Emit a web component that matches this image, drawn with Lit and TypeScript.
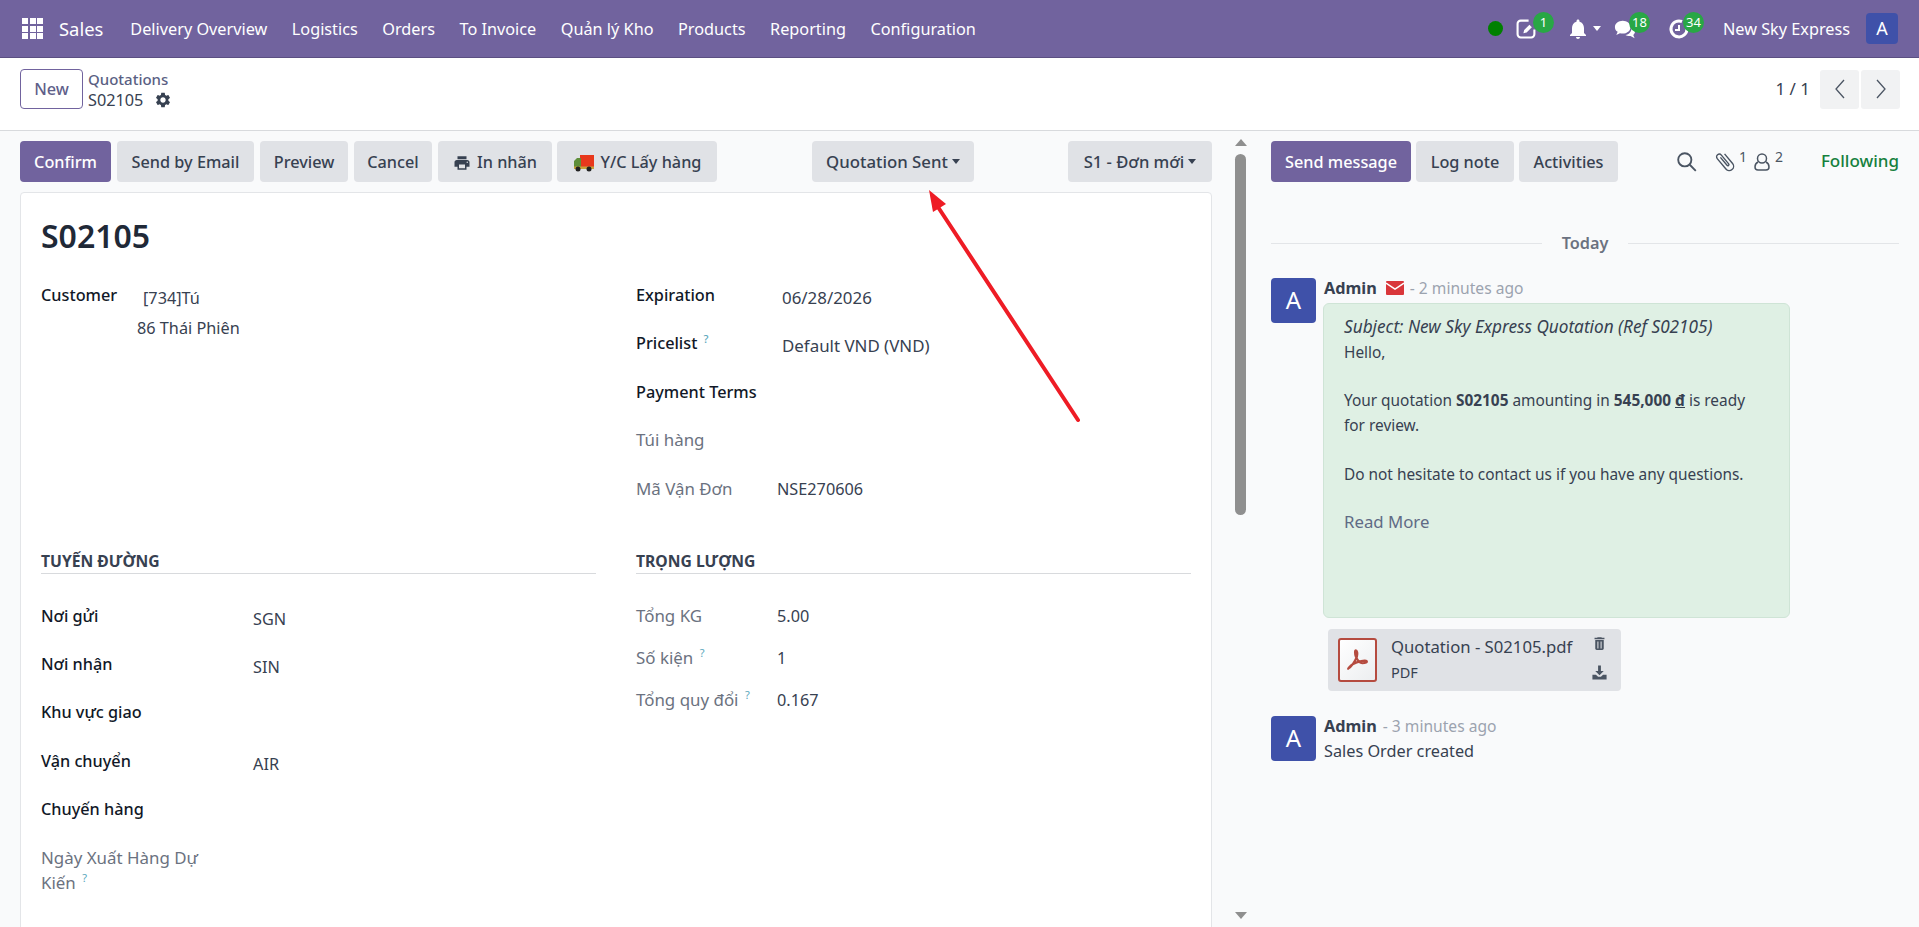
import { LitElement, html, css, svg } from 'lit';
import { customElement } from 'lit/decorators.js';

const icon = (d: string, size: number, fill = 'currentColor') => html`<svg width=${size} height=${size} viewBox="0 0 24 24" fill=${fill}><path d=${d}></path></svg>`;

const GEAR = 'M19.14 12.94c.04-.3.06-.61.06-.94 0-.32-.02-.64-.07-.94l2.03-1.58c.18-.14.23-.41.12-.61l-1.92-3.32c-.12-.22-.37-.29-.59-.22l-2.39.96c-.5-.38-1.03-.7-1.62-.94l-.36-2.54c-.04-.24-.24-.41-.48-.41h-3.84c-.24 0-.43.17-.47.41l-.36 2.54c-.59.24-1.13.57-1.62.94l-2.39-.96c-.22-.08-.47 0-.59.22L2.74 8.87c-.12.21-.08.47.12.61l2.03 1.58c-.05.3-.09.63-.09.94s.02.64.07.94l-2.03 1.58c-.18.14-.23.41-.12.61l1.92 3.32c.12.22.37.29.59.22l2.39-.96c.5.38 1.03.7 1.62.94l.36 2.54c.05.24.24.41.48.41h3.84c.24 0 .44-.17.47-.41l.36-2.54c.59-.24 1.13-.56 1.62-.94l2.39.96c.22.08.47 0 .59-.22l1.92-3.32c.12-.22.07-.47-.12-.61l-2.01-1.58zM12 15.6c-1.98 0-3.6-1.62-3.6-3.6s1.62-3.6 3.6-3.6 3.6 1.62 3.6 3.6-1.62 3.6-3.6 3.6z';
const BELL = 'M12 22c1.1 0 2-.9 2-2h-4c0 1.1.9 2 2 2zm6-6v-5c0-3.07-1.63-5.64-4.5-6.32V4c0-.83-.67-1.5-1.5-1.5s-1.5.67-1.5 1.5v.68C7.64 5.36 6 7.92 6 11v5l-2 2v1h16v-1l-2-2z';
const PRINT = 'M19 8H5c-1.66 0-3 1.34-3 3v6h4v4h12v-4h4v-6c0-1.66-1.34-3-3-3zm-3 11H8v-5h8v5zm3-7c-.55 0-1-.45-1-1s.45-1 1-1 1 .45 1 1-.45 1-1 1zm-1-9H6v4h12V3z';
const TRASH = 'M6 19c0 1.1.9 2 2 2h8c1.1 0 2-.9 2-2V7H6v12zM9 9h1.500v10H9zM13.500 9H15v10h-1.500zM19 4h-3.500l-1-1h-5l-1 1H5v2h14V4z';
const DOWNLOAD = 'M10 2h4v8h4l-6 6-6-6h4zM2 15h5l3 3h4l3-3h5v7H2z';

const menu = ['Delivery Overview', 'Logistics', 'Orders', 'To Invoice', 'Quản lý Kho', 'Products', 'Reporting', 'Configuration'];

@customElement('app-root')
export class AppRoot extends LitElement {
    static styles = css`
        * {
            box-sizing: border-box;
        }
        :host {
            display: block;
            position: relative;
            height: 100vh;
            overflow: hidden;
            font-family: 'Noto Sans', sans-serif;
            font-size: 16.25px;
            line-height: 24.4px;
            color: #374151;
            background: #f9fafb;
        }
        .navbar {
            display: flex;
            align-items: center;
            height: 58px;
            padding: 0 21px 0 22px;
            background: #71639e;
            border-bottom: 1px solid #5b4f82;
            color: #fff;
        }
        .apps {
            display: grid;
            grid-template-columns: repeat(3, 6px);
            gap: 1.5px;
            margin-right: 16px;
        }
        .apps i {
            height: 6px;
            background: #fff;
        }
        .brand {
            font-size: 18.4px;
            margin: 2px 27px 0 0;
        }
        .nav-item {
            margin: 2px 24.5px 0 0;
            white-space: nowrap;
        }
        .systray {
            display: flex;
            align-items: center;
            margin-left: auto;
        }
        .presence {
            width: 15px;
            height: 15px;
            border-radius: 50%;
            background: #008000;
            margin-right: 13px;
        }
        .tray-icon {
            position: relative;
            display: flex;
            align-items: center;
            height: 24px;
        }
        .tray-icon.edit {
            margin-right: 29px;
        }
        .tray-icon.bell {
            gap: 3px;
            margin-right: 13px;
        }
        .tray-icon.chat {
            margin-right: 32px;
        }
        .badge {
            position: absolute;
            top: -5px;
            left: 15px;
            min-width: 21px;
            height: 21px;
            padding: 0 3px;
            border-radius: 11px;
            background: #28a745;
            color: #fff;
            font-size: 13px;
            line-height: 21px;
            text-align: center;
        }
        .edit .badge {
            left: 17px;
        }
        .caret {
            display: inline-block;
            width: 0;
            height: 0;
            border-left: 4.5px solid transparent;
            border-right: 4.5px solid transparent;
            border-top: 5px solid currentColor;
        }
        .company {
            margin: 2px 16px 0 33px;
            white-space: nowrap;
        }
        .avatar {
            display: flex;
            align-items: center;
            justify-content: center;
            flex: none;
            width: 45px;
            height: 45px;
            border-radius: 4px;
            background: #3f51a9;
            color: #fff;
            font-size: 24px;
        }
        .avatar.small {
            width: 32px;
            height: 31px;
            font-size: 18px;
        }
        .control {
            display: flex;
            align-items: center;
            height: 73px;
            padding: 0 19px 10px 20px;
            background: #fff;
            border-bottom: 1px solid #d8dadd;
        }
        .btn {
            display: inline-flex;
            align-items: center;
            justify-content: center;
            height: 41px;
            padding: 2px 0 0;
            border: 0;
            border-radius: 4px;
            background: #e0e2e6;
            color: #374151;
            font: inherit;
            font-weight: 500;
            white-space: nowrap;
        }
        .btn.primary {
            background: #71639e;
            color: #fff;
        }
        .btn.new {
            width: 63px;
            height: 40px;
            padding: 0;
            background: #fff;
            border: 1px solid #71639e;
            color: #5f5f8a;
        }
        .crumbs {
            margin-left: 5px;
            line-height: 21px;
        }
        .crumbs a {
            display: block;
            margin-top: 1px;
            color: #5a5f83;
            font-weight: 500;
            font-size: 15px;
        }
        .crumb-name {
            display: flex;
            align-items: center;
            gap: 11px;
        }
        .pager {
            display: flex;
            align-items: center;
            margin-left: auto;
        }
        .pager span {
            margin-right: 10px;
            font-size: 17px;
        }
        .pager button {
            display: flex;
            align-items: center;
            justify-content: center;
            width: 39px;
            height: 39px;
            margin-left: 2px;
            border: 0;
            border-radius: 3px;
            background: #f1f2f3;
            color: #4b5563;
        }
        .pager button:first-of-type {
            margin-left: 0;
        }
        .main {
            display: flex;
            height: calc(100vh - 131px);
        }
        .form-pane {
            position: relative;
            flex: none;
            width: 1252px;
            padding: 10px 0 0 20px;
        }
        .buttons {
            display: flex;
            width: 1192px;
            gap: 6px;
        }
        .w-confirm { width: 91px; }
        .w-email { width: 137px; }
        .w-preview { width: 88px; }
        .w-cancel { width: 78px; }
        .w-print { width: 114px; }
        .w-truck { width: 160px; margin-left: -1px; }
        .w-quote { width: 162px; margin-left: 89px; font-size: 16.8px; }
        .w-stage { width: 144px; margin-left: auto; font-size: 16.6px; }
        .w-send { width: 140px; }
        .w-log { width: 98px; }
        .w-act { width: 99px; }
        .btn svg {
            margin-right: 6px;
        }
        .btn .caret {
            margin-left: 4px;
            margin-bottom: 3px;
        }
        .sheet {
            width: 1192px;
            height: 780px;
            margin-top: 10px;
            padding: 20px 20px 0;
            background: #fff;
            border: 1px solid #e3e5e8;
            border-radius: 4px;
        }
        h1 {
            margin: 0;
            height: 67px;
            color: #1f2937;
            font-size: 32px;
            font-weight: 600;
            line-height: 46px;
        }
        .grid {
            display: grid;
            grid-template-columns: 555px 555px;
            column-gap: 40px;
        }
        .customer {
            display: flex;
            height: 270px;
            padding-top: 3px;
        }
        .label {
            flex: none;
            color: #111827;
            font-weight: 500;
        }
        .label.muted {
            color: #6b7280;
            font-weight: 400;
            font-size: 16.9px;
        }
        .label sup {
            color: #5ba7bd;
            font-size: 11px;
            line-height: 0;
            margin-left: 2px;
        }
        .customer .label {
            width: 102px;
        }
        .address {
            margin-left: -6px;
            margin-top: 3px;
        }
        .address div:first-child {
            margin-left: 6px;
            margin-bottom: 6px;
        }
        .info {
            padding-top: 3px;
        }
        .row {
            display: flex;
            height: 48.4px;
        }
        .value {
            margin-top: 3px;
        }
        .info .label {
            width: 146px;
        }
        .info .value {
            font-size: 16.9px;
        }
        .info .row.code .label {
            width: 141px;
        }
        .info .row.code .value {
            margin-top: 0;
            font-size: 16.25px;
        }
        .section h3 {
            margin: 0 0 30px;
            height: 23.5px;
            border-bottom: 1px solid #d8dadd;
            color: #374151;
            font-size: 15.7px;
            font-weight: 700;
            line-height: 22px;
            text-transform: uppercase;
        }
        .route .label {
            width: 212px;
        }
        .route .wrap {
            width: 170px;
            padding-top: 1px;
        }
        .weight .row {
            height: 42px;
        }
        .weight .label {
            width: 141px;
        }
        .weight .value {
            margin-top: 0;
        }
        .scrollbar {
            position: absolute;
            top: 0;
            right: 0;
            bottom: 0;
            width: 22px;
        }
        .scrollbar .up,
        .scrollbar .down {
            position: absolute;
            left: 5px;
            width: 0;
            height: 0;
            border-left: 6px solid transparent;
            border-right: 6px solid transparent;
        }
        .scrollbar .up {
            top: 8px;
            border-bottom: 7px solid #8f8f8f;
        }
        .scrollbar .down {
            bottom: 8px;
            border-top: 7px solid #8f8f8f;
        }
        .scrollbar .thumb {
            position: absolute;
            top: 23px;
            left: 5px;
            width: 11px;
            height: 361px;
            border-radius: 6px;
            background: #8f8f8f;
        }
        .chatter {
            flex: 1;
            padding: 10px 20px 0 19px;
        }
        .chat-top {
            display: flex;
            align-items: center;
            gap: 5px;
            height: 41px;
        }
        .chat-tools {
            display: flex;
            align-items: center;
            margin-left: 53px;
            color: #4b5563;
        }
        .chat-tools .search {
            margin-right: 14px;
        }
        .chat-tools .clip {
            margin-right: -2px;
        }
        .chat-tools sup {
            font-size: 14px;
            line-height: 0;
            margin: 0 5px 10px 3px;
        }
        .following {
            margin-left: auto;
            color: #15803d;
            font-size: 17px;
            font-weight: 500;
        }
        .today {
            display: flex;
            align-items: center;
            gap: 20px;
            margin-top: 49px;
            height: 24px;
            color: #6b7280;
            font-weight: 600;
        }
        .today::before,
        .today::after {
            content: '';
            flex: 1;
            height: 1px;
            background: #e3e5e8;
        }
        .message {
            display: flex;
            gap: 8px;
        }
        .m1 {
            margin-top: 23px;
        }
        .m2 {
            margin-top: 25px;
        }
        .head {
            display: flex;
            align-items: center;
            gap: 6px;
            height: 20px;
        }
        .head b {
            color: #374151;
            font-weight: 700;
        }
        .head small {
            color: #9ca3af;
            font-size: 15.6px;
        }
        .envelope {
            margin-left: 3px;
        }
        .created {
            margin-top: 3px;
        }
        .bubble {
            width: 467px;
            height: 315px;
            margin-top: 5px;
            margin-left: -1px;
            padding: 11px 20px 0;
            background: #dff0e4;
            border: 1px solid #cfe4d6;
            border-radius: 6px;
            font-size: 15.4px;
        }
        .bubble em {
            display: block;
            height: 25.6px;
            font-size: 17.2px;
        }
        .bubble p {
            margin: 0 0 24.4px;
        }
        .bubble .more {
            margin-top: -1.5px;
            font-size: 16.8px;
            color: #5f6b85;
        }
        .attachment {
            display: flex;
            align-items: center;
            width: 293px;
            height: 62px;
            margin-top: 11px;
            margin-left: 4px;
            padding: 0 12px 0 10px;
            background: #e0e2e6;
            border-radius: 4px;
        }
        .pdf {
            flex: none;
            width: 39px;
            height: 44px;
            margin-right: 14px;
            border: 2px solid #b54b3f;
            border-radius: 3px;
            background: linear-gradient(135deg, #ffffff, #eceef0);
            display: flex;
            align-items: center;
            justify-content: center;
        }
        .file {
            flex: 1;
            min-width: 0;
            margin-top: -1px;
            white-space: nowrap;
            font-size: 16.7px;
        }
        .file small {
            display: block;
            font-size: 14.5px;
        }
        .file-actions {
            display: flex;
            flex-direction: column;
            gap: 12px;
            margin: -5px 1px 0 0;
            color: #4b5563;
        }
        .arrow {
            position: absolute;
            left: 0;
            top: 0;
            pointer-events: none;
        }
    `;

    render() {
        return html`
            <div class="navbar">
                <div class="apps">${[...Array(9)].map(() => html`<i></i>`)}</div>
                <div class="brand">Sales</div>
                ${menu.map((m) => html`<div class="nav-item">${m}</div>`)}
                <div class="systray">
                    <div class="presence"></div>
                    <div class="tray-icon edit">
                        <svg width="21" height="21" viewBox="0 0 20 20" fill="none" stroke="#fff" stroke-width="2"><path d="M12 2.500H4.500a3 3 0 0 0-3 3v10a3 3 0 0 0 3 3h10a3 3 0 0 0 3-3V11"></path><path d="M7 14.500l.8-3 5-5 2.300 2.300-5 5z" fill="#fff" stroke="none"></path></svg>
                        <span class="badge">1</span>
                    </div>
                    <div class="tray-icon bell">
                        ${icon(BELL, 24)}<span class="caret"></span>
                    </div>
                    <div class="tray-icon chat">
                        <svg width="22" height="22" viewBox="0 0 24 24" fill="#fff"><path d="M1 10c0-4 4-7 8.500-7S18 6 18 10s-4 7-8.500 7c-1 0-2-.2-3-.5L2.500 18.500 4 15c-2-1-3-3-3-5z"></path><path d="M19.500 9c1.500 1 3.500 3 3.500 5.500 0 1.500-.8 3-2 4l1.500 3.500-4.500-2.500c-2 .5-4 .2-5.500-1 4-.2 7-4 7-9.500z"></path></svg>
                        <span class="badge">18</span>
                    </div>
                    <div class="tray-icon">
                        <svg width="22" height="22" viewBox="0 0 22 22" fill="none" stroke="#fff" stroke-width="3"><path d="M14 3.500A8 8 0 1 0 19 11"></path><path d="M11 7v5H7" stroke-width="2"></path></svg>
                        <span class="badge">34</span>
                    </div>
                    <div class="company">New Sky Express</div>
                    <div class="avatar small">A</div>
                </div>
            </div>

            <div class="control">
                <button class="btn new">New</button>
                <div class="crumbs">
                    <a>Quotations</a>
                    <div class="crumb-name">S02105 ${icon(GEAR, 18)}</div>
                </div>
                <div class="pager">
                    <span>1 / 1</span>
                    <button><svg width="14" height="22" viewBox="0 0 14 22" fill="none" stroke="currentColor" stroke-width="1.300"><path d="M11 2L3 11l8 9"></path></svg></button>
                    <button><svg width="14" height="22" viewBox="0 0 14 22" fill="none" stroke="currentColor" stroke-width="1.300"><path d="M3 2l8 9-8 9"></path></svg></button>
                </div>
            </div>

            <div class="main">
                <div class="form-pane">
                    <div class="buttons">
                        <button class="btn primary w-confirm">Confirm</button>
                        <button class="btn w-email">Send by Email</button>
                        <button class="btn w-preview">Preview</button>
                        <button class="btn w-cancel">Cancel</button>
                        <button class="btn w-print">${icon(PRINT, 18)}In nhãn</button>
                        <button class="btn w-truck">
                            <svg width="22" height="18" viewBox="0 0 22 18"><rect x="7" y="1" width="14" height="12" fill="#e8381c"></rect><path d="M1 13V7l3-3h4v9z" fill="#5f8f3a"></path><rect x="1" y="12.500" width="20" height="2.500" fill="#c9a23a"></rect><circle cx="5" cy="15" r="2.500" fill="#222"></circle><circle cx="16" cy="15" r="2.500" fill="#222"></circle></svg>
                            Y/C Lấy hàng
                        </button>
                        <button class="btn w-quote">Quotation Sent<span class="caret"></span></button>
                        <button class="btn w-stage">S1 - Đơn mới<span class="caret"></span></button>
                    </div>
                    <div class="sheet">
                        <h1>S02105</h1>
                        <div class="grid">
                            <div class="customer">
                                <div class="label">Customer</div>
                                <div class="address">
                                    <div>[734]Tú</div>
                                    <div>86 Thái Phiên</div>
                                </div>
                            </div>
                            <div class="info">
                                <div class="row"><div class="label">Expiration</div><div class="value">06/28/2026</div></div>
                                <div class="row"><div class="label">Pricelist <sup>?</sup></div><div class="value">Default VND (VND)</div></div>
                                <div class="row"><div class="label">Payment Terms</div></div>
                                <div class="row"><div class="label muted">Túi hàng</div></div>
                                <div class="row code"><div class="label muted">Mã Vận Đơn</div><div class="value">NSE270606</div></div>
                            </div>
                            <div class="section route">
                                <h3>Tuyến đường</h3>
                                <div class="row"><div class="label">Nơi gửi</div><div class="value">SGN</div></div>
                                <div class="row"><div class="label">Nơi nhận</div><div class="value">SIN</div></div>
                                <div class="row"><div class="label">Khu vực giao</div></div>
                                <div class="row"><div class="label">Vận chuyển</div><div class="value">AIR</div></div>
                                <div class="row"><div class="label">Chuyến hàng</div></div>
                                <div class="row"><div class="label muted wrap">Ngày Xuất Hàng Dự Kiến <sup>?</sup></div></div>
                            </div>
                            <div class="section weight">
                                <h3>Trọng lượng</h3>
                                <div class="row"><div class="label muted">Tổng KG</div><div class="value">5.00</div></div>
                                <div class="row"><div class="label muted">Số kiện <sup>?</sup></div><div class="value">1</div></div>
                                <div class="row"><div class="label muted">Tổng quy đổi <sup>?</sup></div><div class="value">0.167</div></div>
                            </div>
                        </div>
                    </div>
                    <div class="scrollbar"><div class="up"></div><div class="thumb"></div><div class="down"></div></div>
                </div>

                <div class="chatter">
                    <div class="chat-top">
                        <button class="btn primary w-send">Send message</button>
                        <button class="btn w-log">Log note</button>
                        <button class="btn w-act">Activities</button>
                        <div class="chat-tools">
                            <svg class="search" width="22" height="22" viewBox="0 0 20 20" fill="none" stroke="currentColor" stroke-width="1.700"><circle cx="8" cy="8" r="6"></circle><path d="M12.500 12.500L18 18"></path></svg>
                            <svg class="clip" width="26" height="26" viewBox="0 0 24 24" fill="none" stroke="currentColor" stroke-width="1.300" transform="rotate(-40)"><path d="M16.500 6v11.500a4 4 0 0 1-8 0V5a2.500 2.500 0 0 1 5 0v10.500a1 1 0 0 1-2 0V6"></path></svg>
                            <sup>1</sup>
                            <svg width="20" height="20" viewBox="0 0 20 20" fill="none" stroke="currentColor" stroke-width="1.500"><circle cx="10" cy="6.500" r="4.500"></circle><path d="M6 10c-2 1-3 3-3 5 0 2 1 3 3 3h8c2 0 3-1 3-3 0-2-1-4-3-5"></path></svg>
                            <sup>2</sup>
                        </div>
                        <div class="following">Following</div>
                    </div>
                    <div class="today">Today</div>

                    <div class="message m1">
                        <div class="avatar">A</div>
                        <div>
                            <div class="head">
                                <b>Admin</b>
                                <svg class="envelope" width="18" height="14" viewBox="0 0 18 14"><rect width="18" height="14" rx="1" fill="#d9363a"></rect><path d="M0 2l9 6 9-6" fill="none" stroke="#fff" stroke-width="1.500"></path></svg>
                                <small>- 2 minutes ago</small>
                            </div>
                            <div class="bubble">
                                <em>Subject: New Sky Express Quotation (Ref S02105)</em>
                                <p>Hello,</p>
                                <p>Your quotation <b>S02105</b> amounting in <b>545,000 <u>đ</u></b> is ready for review.</p>
                                <p>Do not hesitate to contact us if you have any questions.</p>
                                <div class="more">Read More</div>
                            </div>
                            <div class="attachment">
                                <div class="pdf">
                                    <svg width="28" height="28" viewBox="0 0 26 26" fill="none" stroke="#b54b3f" stroke-width="2"><path d="M4 21c2-1 6-6 8-11 1-3 0-6-1-6s-1 3 0 6c2 4 4 6 6 6 3 0 5-1 4-2s-8 0-13 3c-2 1-5 5-4 4z"></path></svg>
                                </div>
                                <div class="file">Quotation - S02105.pdf<small>PDF</small></div>
                                <div class="file-actions">${icon(TRASH, 17)}${icon(DOWNLOAD, 17)}</div>
                            </div>
                        </div>
                    </div>

                    <div class="message m2">
                        <div class="avatar">A</div>
                        <div>
                            <div class="head"><b>Admin</b><small>- 3 minutes ago</small></div>
                            <div class="created">Sales Order created</div>
                        </div>
                    </div>
                </div>
            </div>

            <svg class="arrow" width="1919" height="927" viewBox="0 0 1919 927">
                ${svg`<path d="M1078 420L938 207" stroke="#ee1c25" stroke-width="4" stroke-linecap="round" fill="none"></path><path d="M929 190L946 204L933 212z" fill="#ee1c25"></path>`}
            </svg>
        `;
    }
}
